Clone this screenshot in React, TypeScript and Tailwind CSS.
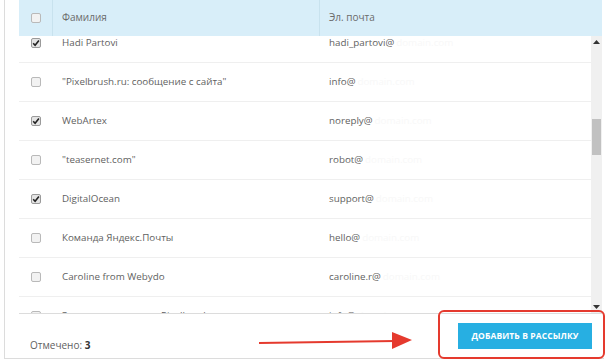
import React, { useEffect, useRef } from 'react'

type Row = { name: string; email: string; checked: boolean }

const rows: Row[] = [
  { name: 'Hadi Partovi', email: 'hadi_partovi@', checked: true },
  { name: '"Pixelbrush.ru: сообщение с сайта"', email: 'info@', checked: false },
  { name: 'WebArtex', email: 'noreply@', checked: true },
  { name: '"teasernet.com"', email: 'robot@', checked: false },
  { name: 'DigitalOcean', email: 'support@', checked: true },
  { name: 'Команда Яндекс.Почты', email: 'hello@', checked: false },
  { name: 'Caroline from Webydo', email: 'caroline.r@', checked: false },
  { name: 'Зимняя распродажа Pixelbrush', email: 'info@', checked: false },
]

const Checkbox: React.FC<{ checked: boolean }> = ({ checked }) => (
  <span
    className={
      'flex items-center justify-center w-[10px] h-[10px] rounded-[2px] border ' +
      (checked ? 'border-[#9a9a9a] bg-[#e4e4e4]' : 'border-[#b9b9b9] bg-[#f2f2f2]')
    }
  >
    {checked && (
      <svg width="8" height="8" viewBox="0 0 8 8">
        <path d="M1.2 4.2 L3.1 6.2 L6.9 1.4" fill="none" stroke="#222" strokeWidth="1.6" />
      </svg>
    )}
  </span>
)

const App: React.FC = () => {
  const listRef = useRef<HTMLDivElement>(null)

  useEffect(() => {
    if (listRef.current) listRef.current.scrollTop = 12
  }, [])

  return (
    <div className="relative w-[616px] h-[363px] bg-white overflow-hidden" style={{ fontFamily: '"Open Sans", sans-serif' }}>
      <div className="ml-[4px] w-[600px] border-l border-b border-[#dcdcdc] pl-[14px]">
        {/* header */}
        <div className="flex w-[583px] h-[36px] bg-[#d8eef9] text-[10px] text-[#6b6b6b]">
          <div className="flex items-center justify-center w-[34px] border-r border-[#c8e2ee]">
            <Checkbox checked={false} />
          </div>
          <div className="flex items-center w-[267px] pl-[9px] pb-[1px] border-r border-[#c8e2ee]">Фамилия</div>
          <div className="flex items-center pl-[9px] pb-[1px]">Эл. почта</div>
        </div>

        {/* list */}
        <div className="flex w-[583px] h-[277px]">
          <div ref={listRef} className="w-[572px] h-[277px] overflow-hidden">
            {rows.map((r, i) => (
              <div key={i} className="flex h-[39px] border-b border-[#efefef] text-[9.8px] text-[#5f5f5f]">
                <div className="flex items-center justify-center w-[34px]">
                  <Checkbox checked={r.checked} />
                </div>
                <div className="flex items-center w-[267px] pl-[9px]">{r.name}</div>
                <div className="flex items-center pl-[9px]">
                  {r.email}
                  <span className="ml-[2px] text-[#f8f8f8]">domain.com</span>
                </div>
              </div>
            ))}
          </div>
          <div className="flex flex-col w-[11px] bg-[#f0f0f0]">
            <div className="flex items-center justify-center h-[12px]">
              <svg width="7" height="4" viewBox="0 0 7 4">
                <path d="M0 4 L3.5 0 L7 4 Z" fill="#333" />
              </svg>
            </div>
            <div className="mt-[71px] mx-auto w-[9px] h-[36px] bg-[#c1c1c1]" />
            <div className="flex-1" />
            <div className="flex items-center justify-center h-[12px]">
              <svg width="7" height="4" viewBox="0 0 7 4">
                <path d="M0 0 L3.5 4 L7 0 Z" fill="#333" />
              </svg>
            </div>
          </div>
        </div>

        {/* footer */}
        <div className="flex items-start justify-between w-[583px] h-[45px] border-t border-[#dcdcdc] pl-[11px] pr-[10px]">
          <div className="pt-[24px] text-[10px] text-[#5f5f5f]">
            Отмечено: <span className="font-bold text-[#333]">3</span>
          </div>
          <button className="mt-[9px] w-[134px] h-[26px] bg-[#27afe2] text-white text-[8.5px] font-bold tracking-[0.1px]">
            ДОБАВИТЬ В РАССЫЛКУ
          </button>
        </div>
      </div>

      {/* annotation overlays */}
      <div className="absolute left-[438px] top-[310px] w-[167px] h-[49px] border-[2.5px] border-[#e53a2e] rounded-[6px]" />
      <svg className="absolute left-[255px] top-[328px]" width="160" height="24" viewBox="0 0 160 24">
        <path d="M4 15 L140 13" stroke="#e53a2e" strokeWidth="2.2" fill="none" />
        <path d="M137 4 L157 12 L137 21 Z" fill="#e53a2e" />
      </svg>
    </div>
  )
}

export default App
